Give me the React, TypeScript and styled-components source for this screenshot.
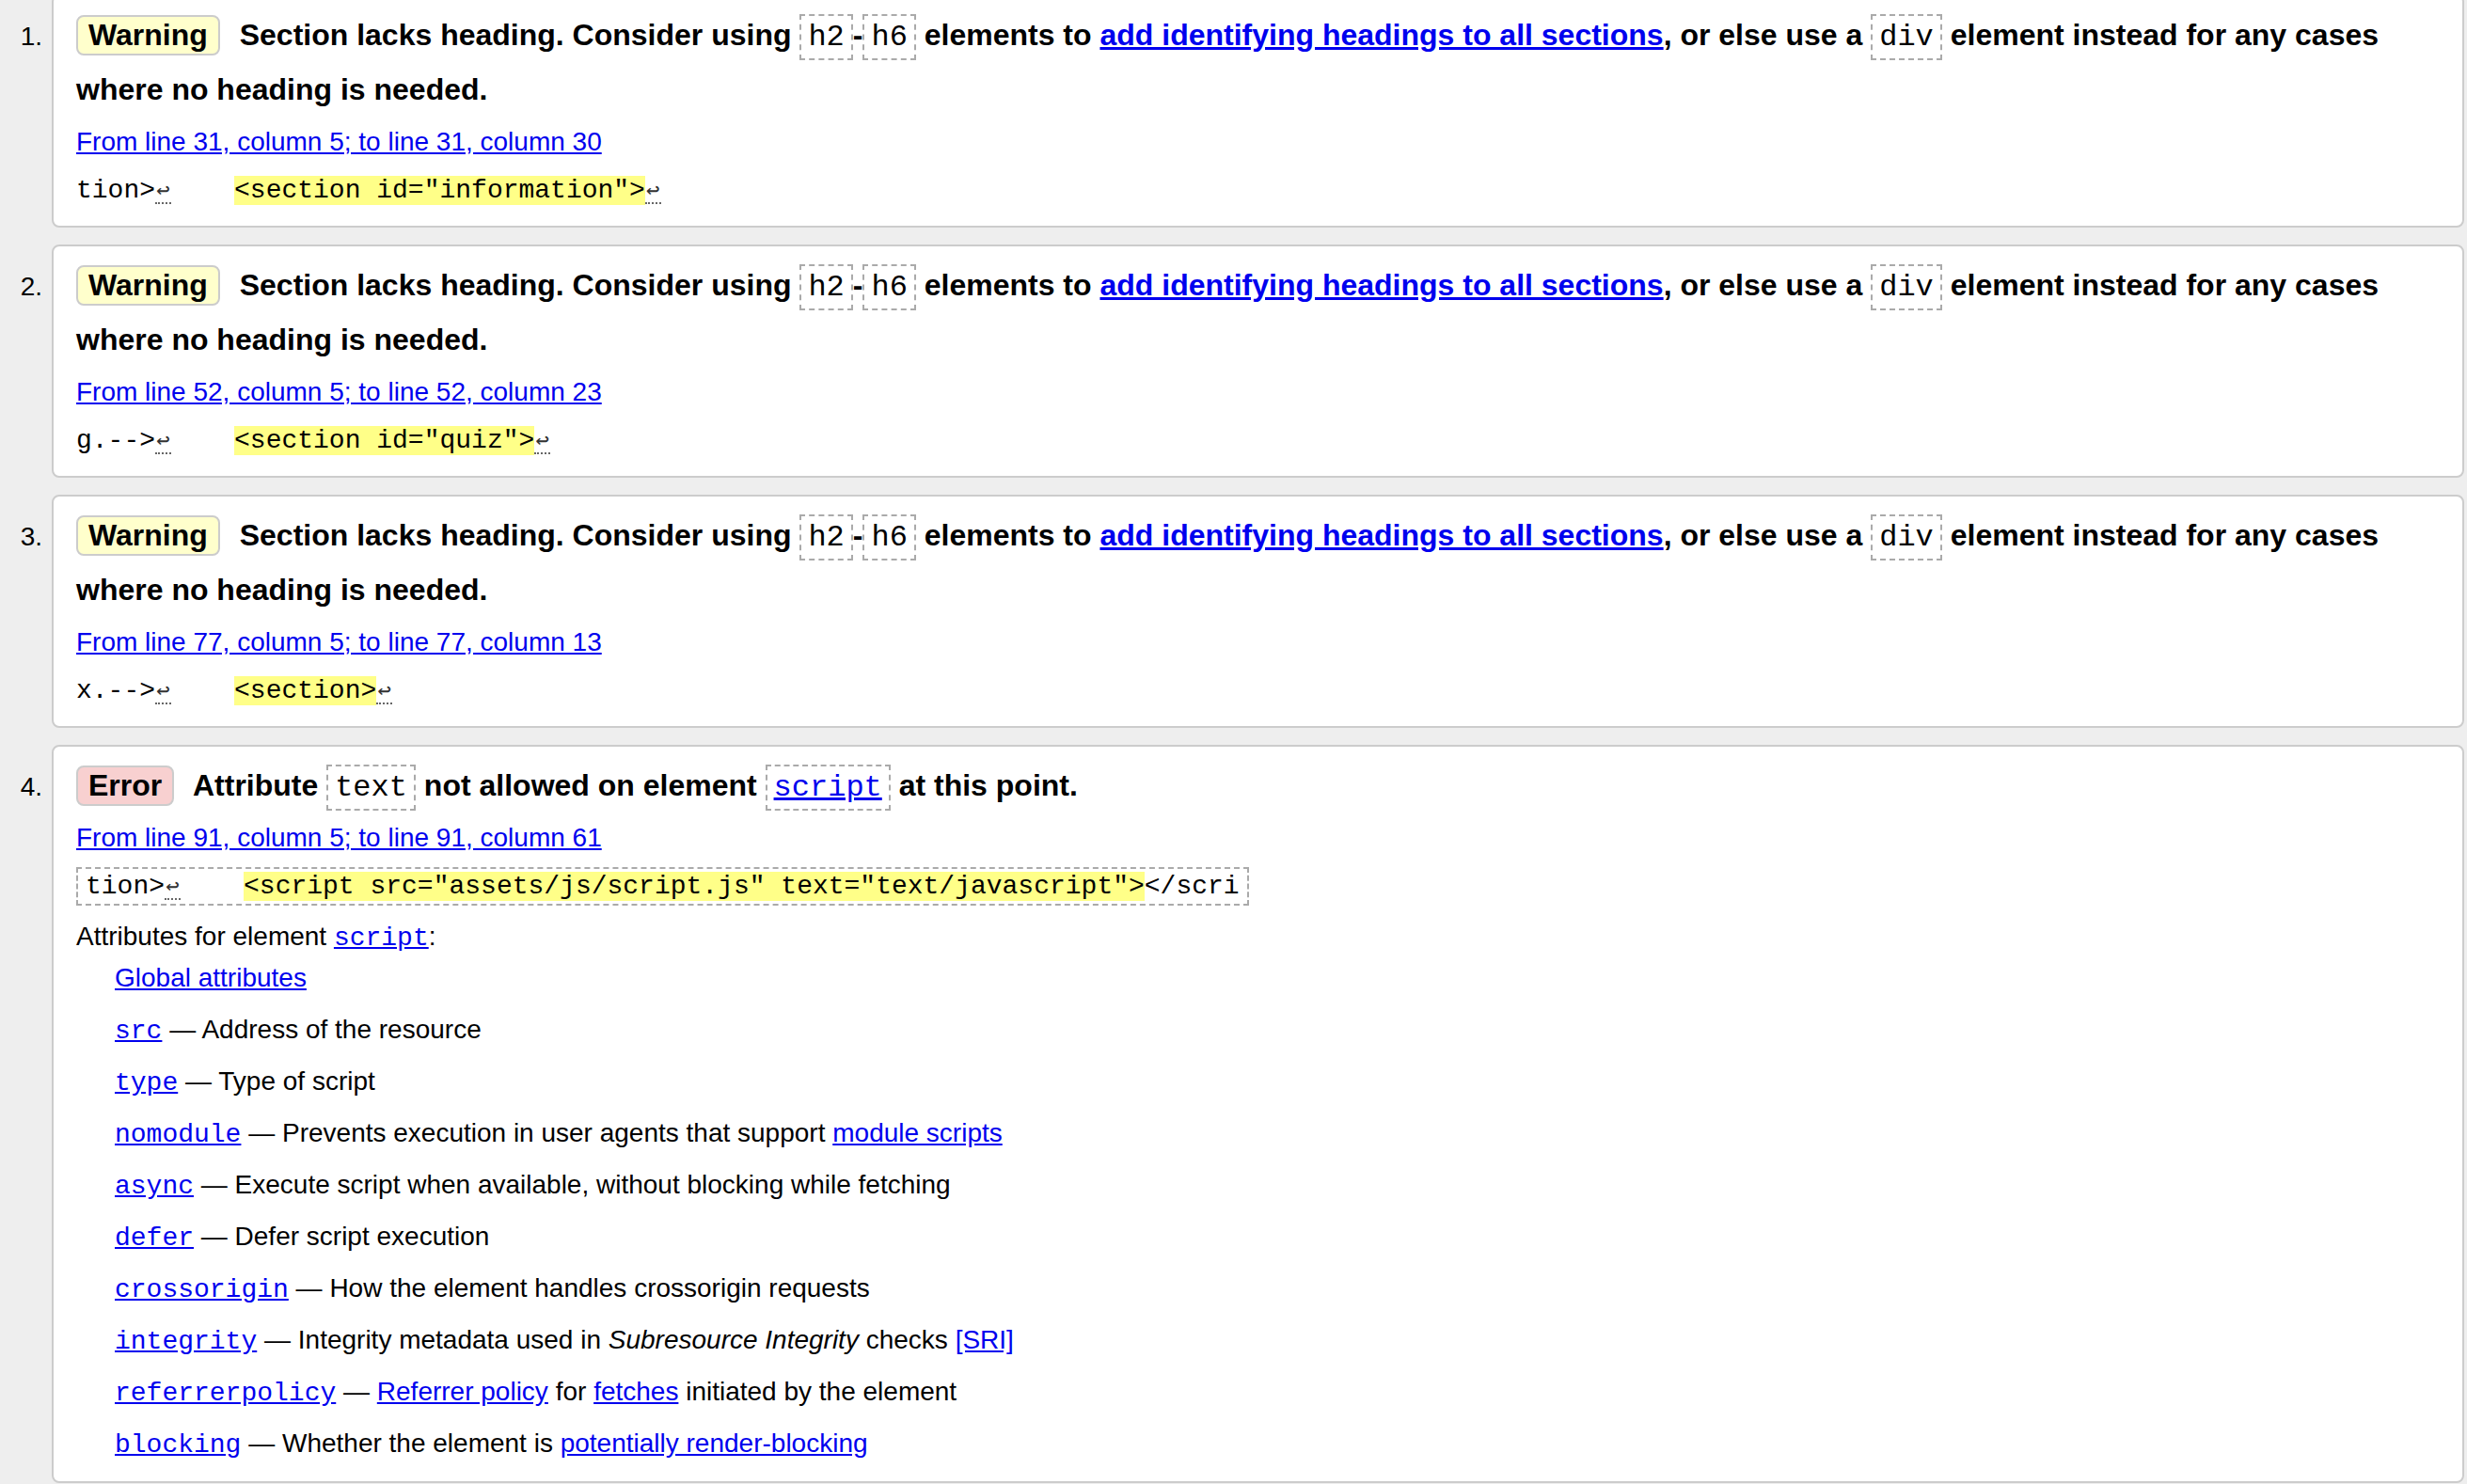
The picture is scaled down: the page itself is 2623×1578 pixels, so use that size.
import React from 'react'
import styled, { createGlobalStyle, css } from 'styled-components'

const GlobalStyle = createGlobalStyle`
  html, body {
    margin: 0;
    padding: 0;
  }
  body {
    background: #eee;
    color: #000;
    font-family: "Liberation Sans", Arial, Helvetica, sans-serif;
    overflow: hidden;
  }
`

const mono = `"Liberation Mono", "Courier New", monospace`

const Results = styled.ol`
  list-style: none;
  margin: -6px 3px 0 0;
  padding: 0;
  display: flex;
  flex-direction: column;
  gap: 18px;
`

const Item = styled.li`
  display: grid;
  grid-template-columns: 55px 1fr;
  align-items: baseline;
`

const Index = styled.span`
  font-size: 28px;
  text-align: right;
  padding-right: 10px;
`

const Card = styled.div<{ $last?: boolean }>`
  min-width: 0;
  background: #fff;
  border: 2px solid #ccc;
  border-radius: 8px;
  padding: 12px 24px ${p => (p.$last ? '20px' : '12px')};
`

const Message = styled.p`
  margin: 0;
  font-size: 32px;
  font-weight: bold;
  line-height: 58px;
`

const Badge = styled.strong<{ $kind: 'warning' | 'error' }>`
  display: inline-block;
  line-height: normal;
  padding: 1px 11px;
  margin-right: 12px;
  border: 2px solid #ccc;
  border-radius: 8px;
  background: ${p => (p.$kind === 'error' ? '#f8d0d0' : '#ffffcc')};
`

const Code = styled.code`
  font-family: ${mono};
  font-weight: normal;
  font-size: 1em;
  line-height: 1;
  padding: 4px 7px;
  border: 2px dashed #aaa;
`

const Link = styled.a`
  color: #00e;
  text-decoration: underline;
`

const MonoLink = styled(Link)`
  font-family: ${mono};
  line-height: 1;
`

const Location = styled.p`
  margin: 0;
  font-size: 28px;
  line-height: 54px;
`

const Extract = styled.p<{ $boxed?: boolean }>`
  margin: 0;
  font-family: ${mono};
  font-size: 28px;
  line-height: 50px;
  white-space: pre;
  ${p =>
    p.$boxed &&
    css`
      margin-top: 4px;
      width: fit-content;
      line-height: normal;
      padding: 3px 8px;
      border: 2px dashed #aaa;
    `}
`

const LineFeed = styled.span`
  display: inline-block;
  width: 16.8px;
  font-family: "DejaVu Sans Mono", "DejaVu Sans", monospace;
  font-size: 24px;
  line-height: 18px;
  text-align: center;
  color: #333;
  padding-bottom: 4px;
  border-bottom: 2px dotted #666;
`

const Highlight = styled.mark`
  background: #ffff88;
  color: inherit;
`

const AttrHeading = styled.p`
  margin: 9px 0 0;
  font-size: 28px;
  line-height: 48px;
`

const AttrList = styled.dl`
  margin: 0;
  padding-left: 41px;
  font-size: 28px;
  line-height: 40px;
`

const AttrItem = styled.dd`
  margin: 0;
  & + & {
    margin-top: 15px;
  }
`

const warnings = [
  {
    loc: 'From line 31, column 5; to line 31, column 30',
    before: 'tion>',
    mark: '<section id="information">',
  },
  {
    loc: 'From line 52, column 5; to line 52, column 23',
    before: 'g.-->',
    mark: '<section id="quiz">',
  },
  {
    loc: 'From line 77, column 5; to line 77, column 13',
    before: 'x.-->',
    mark: '<section>',
  },
]

const LF = () => <LineFeed title="Line break">↩</LineFeed>

export default function App() {
  return (
    <>
      <GlobalStyle />
      <Results>
        {warnings.map((w, i) => (
          <Item key={i}>
            <Index>{i + 1}.</Index>
            <Card>
              <Message>
                <Badge $kind="warning">Warning</Badge> Section lacks heading. Consider using{' '}
                <Code>h2</Code>-<Code>h6</Code> elements to{' '}
                <Link href="#">add identifying headings to all sections</Link>, or else use a{' '}
                <Code>div</Code> element instead for any cases where no heading is needed.
              </Message>
              <Location>
                <Link href="#">{w.loc}</Link>
              </Location>
              <Extract>
                {w.before}
                <LF />
                {'    '}
                <Highlight>{w.mark}</Highlight>
                <LF />
              </Extract>
            </Card>
          </Item>
        ))}
        <Item>
          <Index>4.</Index>
          <Card $last>
            <Message>
              <Badge $kind="error">Error</Badge> Attribute <Code>text</Code> not allowed on element{' '}
              <Code>
                <Link href="#">script</Link>
              </Code>{' '}
              at this point.
            </Message>
            <Location>
              <Link href="#">From line 91, column 5; to line 91, column 61</Link>
            </Location>
            <Extract $boxed>
              tion&gt;
              <LF />
              {'    '}
              <Highlight>{'<script src="assets/js/script.js" text="text/javascript">'}</Highlight>
              {'</scri'}
            </Extract>
            <AttrHeading>
              Attributes for element <MonoLink href="#">script</MonoLink>:
            </AttrHeading>
            <AttrList>
              <AttrItem>
                <Link href="#">Global attributes</Link>
              </AttrItem>
              <AttrItem>
                <MonoLink href="#">src</MonoLink> — Address of the resource
              </AttrItem>
              <AttrItem>
                <MonoLink href="#">type</MonoLink> — Type of script
              </AttrItem>
              <AttrItem>
                <MonoLink href="#">nomodule</MonoLink> — Prevents execution in user agents that support{' '}
                <Link href="#">module scripts</Link>
              </AttrItem>
              <AttrItem>
                <MonoLink href="#">async</MonoLink> — Execute script when available, without blocking while fetching
              </AttrItem>
              <AttrItem>
                <MonoLink href="#">defer</MonoLink> — Defer script execution
              </AttrItem>
              <AttrItem>
                <MonoLink href="#">crossorigin</MonoLink> — How the element handles crossorigin requests
              </AttrItem>
              <AttrItem>
                <MonoLink href="#">integrity</MonoLink> — Integrity metadata used in <i>Subresource Integrity</i>{' '}
                checks <Link href="#">[SRI]</Link>
              </AttrItem>
              <AttrItem>
                <MonoLink href="#">referrerpolicy</MonoLink> — <Link href="#">Referrer policy</Link> for{' '}
                <Link href="#">fetches</Link> initiated by the element
              </AttrItem>
              <AttrItem>
                <MonoLink href="#">blocking</MonoLink> — Whether the element is{' '}
                <Link href="#">potentially render-blocking</Link>
              </AttrItem>
            </AttrList>
          </Card>
        </Item>
      </Results>
    </>
  )
}
